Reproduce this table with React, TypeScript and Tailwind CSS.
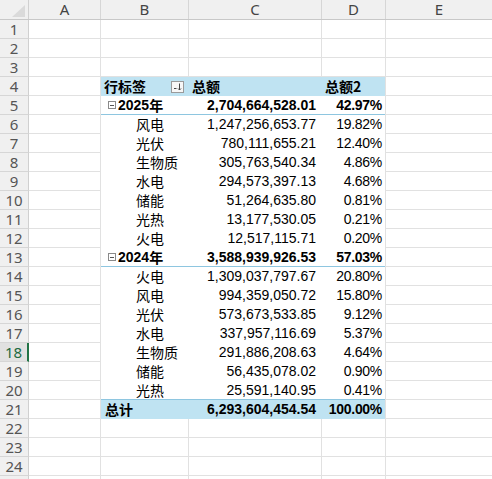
import React from "react";

// pivot rows 5..21
type PivotRow = {
	kind: "group" | "item" | "total";
	label: string;
	sum: string;
	pct: string;
};

const pivot: PivotRow[] = [
	{ kind: "group", label: "2025年", sum: "2,704,664,528.01", pct: "42.97%" },
	{ kind: "item", label: "风电", sum: "1,247,256,653.77", pct: "19.82%" },
	{ kind: "item", label: "光伏", sum: "780,111,655.21", pct: "12.40%" },
	{ kind: "item", label: "生物质", sum: "305,763,540.34", pct: "4.86%" },
	{ kind: "item", label: "水电", sum: "294,573,397.13", pct: "4.68%" },
	{ kind: "item", label: "储能", sum: "51,264,635.80", pct: "0.81%" },
	{ kind: "item", label: "光热", sum: "13,177,530.05", pct: "0.21%" },
	{ kind: "item", label: "火电", sum: "12,517,115.71", pct: "0.20%" },
	{ kind: "group", label: "2024年", sum: "3,588,939,926.53", pct: "57.03%" },
	{ kind: "item", label: "火电", sum: "1,309,037,797.67", pct: "20.80%" },
	{ kind: "item", label: "风电", sum: "994,359,050.72", pct: "15.80%" },
	{ kind: "item", label: "光伏", sum: "573,673,533.85", pct: "9.12%" },
	{ kind: "item", label: "水电", sum: "337,957,116.69", pct: "5.37%" },
	{ kind: "item", label: "生物质", sum: "291,886,208.63", pct: "4.64%" },
	{ kind: "item", label: "储能", sum: "56,435,078.02", pct: "0.90%" },
	{ kind: "item", label: "光热", sum: "25,591,140.95", pct: "0.41%" },
	{ kind: "total", label: "总计", sum: "6,293,604,454.54", pct: "100.00%" },
];

const cjk = "font-['Noto_Sans_CJK_SC',sans-serif]";
const num = "font-['Liberation_Sans','Noto_Sans_CJK_SC',sans-serif]";

function RowHead({ n, active }: { n?: number; active?: boolean }) {
	return (
		<div
			className={
				"w-[29px] shrink-0 flex items-center justify-center border-b border-[#d6d6d6] font-['Noto_Sans',sans-serif] text-[15px] leading-none " +
				(active
					? "bg-[#e1e1e1] text-[#1d6a3f] border-r-2 border-r-[#217346]"
					: "bg-[#f0f0f0] text-[#555] border-r border-r-[#d0d0d0]")
			}
		>
			{n}
		</div>
	);
}

function Plain({ w }: { w: string }) {
	return <div className={w + " shrink-0 h-full border-r border-b border-[#e1e1e1]"} />;
}

function CollapseBox() {
	return (
		<span className="inline-flex w-[8px] h-[8px] mr-[2px] border border-[#8a8a8a] bg-white items-center justify-center">
			<span className="block w-[4px] h-px bg-[#555]" />
		</span>
	);
}

function SortButton() {
	return (
		<span className="w-[13px] h-[12px] border border-[#9a9a9a] bg-[#f7f7f7] flex items-center justify-center">
			<svg width="11" height="10" viewBox="0 0 11 10">
				<path d="M2 6.5h2.5" stroke="#444" strokeWidth="1" />
				<path d="M7.5 1.5v6.5M6 6.5L7.5 8l1.5-1.5" stroke="#444" strokeWidth="1" fill="none" />
			</svg>
		</span>
	);
}

function EmptyRow({ n }: { n?: number }) {
	return (
		<div className="flex h-[19px]">
			<RowHead n={n} />
			<Plain w="w-[72px]" />
			<Plain w="w-[88px]" />
			<Plain w="w-[133px]" />
			<Plain w="w-[64px]" />
			<div className="flex-1 h-full border-b border-[#e1e1e1]" />
		</div>
	);
}

function PivotLine({ n, row, nextGroupLine }: { n: number; row: PivotRow; nextGroupLine: boolean }) {
	const bold = row.kind !== "item";
	const total = row.kind === "total";
	const bottom =
		row.kind === "group" || nextGroupLine
			? "border-[#8ec6e0]"
			: total
			? "border-[#bfe3f2]"
			: "border-white";
	const bg = total ? "bg-[#bfe3f2]" : "bg-white";
	return (
		<div className="flex h-[19px]">
			<RowHead n={n} active={n === 18} />
			<Plain w="w-[72px]" />
			<div className={"flex shrink-0 h-full border-b " + bottom + " " + bg}>
				<div
					className={
						"w-[88px] h-full flex items-center text-[14px] text-black " +
						cjk +
						(bold ? " font-bold" : "") +
						(row.kind === "item" ? " pl-[35px]" : row.kind === "group" ? " pl-[7px]" : " pl-[4px]")
					}
				>
					{row.kind === "group" && <CollapseBox />}
					<span className={row.kind === "group" ? num + " font-bold text-[14px]" : ""}>
						{row.kind === "group" ? row.label.slice(0, 4) : row.label}
					</span>
					{row.kind === "group" && <span>年</span>}
				</div>
				<div
					className={
						"w-[133px] h-full flex items-center justify-end pr-[6px] text-[14px] text-black " +
						num +
						(bold ? " font-bold" : "")
					}
				>
					{row.sum}
				</div>
				<div
					className={
						"w-[63px] h-full flex items-center justify-end pr-[3px] text-[14px] tracking-[-0.3px] text-black " +
						num +
						(bold ? " font-bold" : "")
					}
				>
					{row.pct}
				</div>
			</div>
			<div className="w-px shrink-0 h-full bg-[#e1e1e1]" />
			<div className="flex-1 h-full border-b border-[#e1e1e1]" />
		</div>
	);
}

export default function App() {
	const cols = [
		{ w: "w-[72px]", l: "A" },
		{ w: "w-[88px]", l: "B" },
		{ w: "w-[133px]", l: "C" },
		{ w: "w-[64px]", l: "D" },
	];
	return (
		<div className="w-[492px] h-[479px] overflow-hidden bg-white select-none">
			{/* column headers */}
			<div className="flex h-[20px] bg-[#f0f0f0] border-b border-[#c8c8c8]">
				<div className="w-[29px] shrink-0 h-full border-r border-[#d0d0d0] relative">
					<svg className="absolute right-[3px] bottom-[2px]" width="13" height="12" viewBox="0 0 13 12">
						<polygon points="13,0 13,12 0,12" fill="#dadada" />
					</svg>
				</div>
				{cols.map((c) => (
					<div
						key={c.l}
						className={
							c.w +
							" shrink-0 h-full border-r border-[#d6d6d6] flex items-center justify-center font-['Noto_Sans',sans-serif] text-[15px] text-[#444]"
						}
					>
						{c.l}
					</div>
				))}
				<div className="flex-1 h-full flex items-center justify-center font-['Noto_Sans',sans-serif] text-[15px] text-[#444]">
					E
				</div>
			</div>

			{[1, 2, 3].map((n) => (
				<EmptyRow key={n} n={n} />
			))}

			{/* pivot header row 4 */}
			<div className="flex h-[19px]">
				<RowHead n={4} />
				<Plain w="w-[72px]" />
				<div className={"flex shrink-0 h-full bg-[#bfe3f2] text-[14px] font-bold text-black " + cjk}>
					<div className="w-[88px] h-full flex items-center justify-between pl-[3px] pr-[5px]">
						<span>行标签</span>
						<SortButton />
					</div>
					<div className="w-[133px] h-full flex items-center pl-[3px]">总额</div>
					<div className="w-[63px] h-full flex items-center pl-[3px]">总额2</div>
				</div>
				<div className="w-px shrink-0 h-full bg-[#e1e1e1]" />
				<div className="flex-1 h-full border-b border-[#e1e1e1]" />
			</div>

			{pivot.map((row, i) => (
				<PivotLine
					key={i}
					n={i + 5}
					row={row}
					nextGroupLine={i + 1 < pivot.length && pivot[i + 1].kind === "total"}
				/>
			))}

			{[22, 23, 24].map((n) => (
				<EmptyRow key={n} n={n} />
			))}
			<EmptyRow />
		</div>
	);
}
